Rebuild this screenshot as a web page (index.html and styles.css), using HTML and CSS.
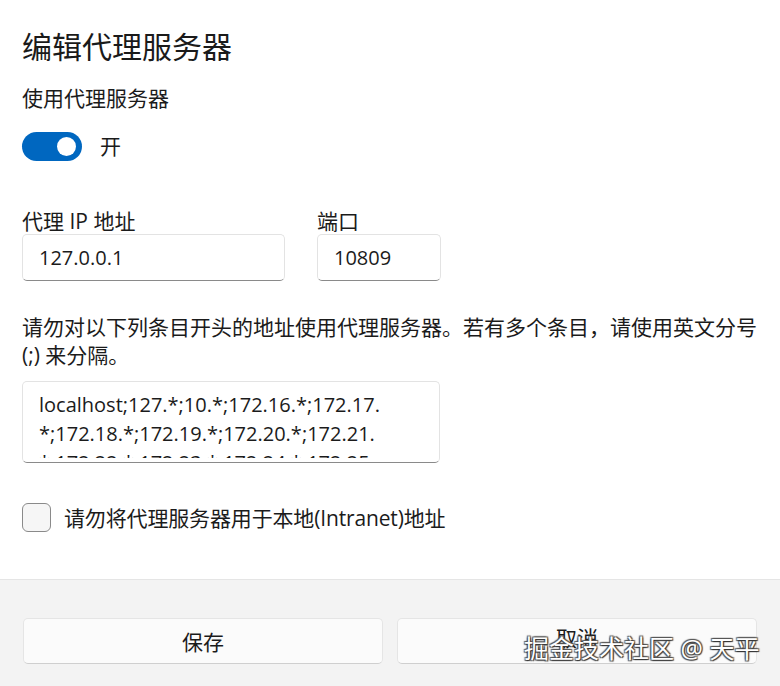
FILE: index.html
```html
<!DOCTYPE html>
<html lang="zh-CN">
<head>
<meta charset="utf-8">
<title>编辑代理服务器</title>
<link rel="stylesheet" href="styles.css">
</head>
<body>
<div class="dialog">
  <div class="content">
    <h1 class="title">编辑代理服务器</h1>
    <div class="label-use">使用代理服务器</div>
    <div class="toggle-row">
      <span class="toggle"><span class="knob"></span></span>
      <span class="toggle-text">开</span>
    </div>
    <div class="fields">
      <div class="field field-ip">
        <div class="field-label">代理 IP 地址</div>
        <div class="input">127.0.0.1</div>
      </div>
      <div class="field field-port">
        <div class="field-label">端口</div>
        <div class="input">10809</div>
      </div>
    </div>
    <p class="desc">请勿对以下列条目开头的地址使用代理服务器。若有多个条目，请使用英文分号 (;) 来分隔。</p>
    <div class="textarea">
      <div class="textarea-inner">localhost;127.*;10.*;172.16.*;172.17.<br>*;172.18.*;172.19.*;172.20.*;172.21.<br>*;172.22.*;172.23.*;172.24.*;172.25.</div>
    </div>
    <div class="check-row">
      <span class="checkbox"></span>
      <span class="check-label">请勿将代理服务器用于本地(Intranet)地址</span>
    </div>
  </div>
  <div class="footer">
    <button class="btn">保存</button>
    <button class="btn btn-cancel">取消</button>
  </div>
  <div class="watermark">掘金技术社区 @ 天平</div>
</div>
</body>
</html>
```
FILE: styles.css
```css
* { box-sizing: border-box; }
html, body {
  margin: 0;
  padding: 0;
  background: #ffffff;
}
body {
  font-family: "Segoe UI", "Open Sans", "Noto Sans CJK SC", sans-serif;
  color: #1b1b1b;
  width: 780px;
  height: 686px;
  overflow: hidden;
}
.dialog {
  position: relative;
  width: 780px;
  height: 686px;
  display: flex;
  flex-direction: column;
}
.content {
  height: 579px;
  padding: 27px 22px 0 22px;
  display: flex;
  flex-direction: column;
}
.title {
  margin: 0;
  font-size: 30px;
  line-height: 40px;
  font-weight: 400;
  color: #1a1a1a;
}
.label-use {
  margin-top: 17px;
  font-size: 21px;
  line-height: 28px;
}
.toggle-row {
  margin-top: 20px;
  display: flex;
  align-items: center;
  gap: 18px;
  height: 28px;
}
.toggle {
  width: 60px;
  height: 29px;
  border-radius: 15px;
  background: #0067c0;
  display: flex;
  align-items: center;
  justify-content: flex-end;
  padding-right: 6px;
}
.knob {
  width: 19px;
  height: 19px;
  border-radius: 50%;
  background: #ffffff;
}
.toggle-text {
  font-size: 21px;
  line-height: 28px;
}
.fields {
  margin-top: 48px;
  display: flex;
  gap: 32px;
}
.field-label {
  font-size: 21px;
  line-height: 26px;
}
.field-ip .input { width: 263px; }
.field-port .input { width: 124px; }
.input {
  height: 47px;
  border: 1px solid #e3e3e3;
  border-bottom-color: #8a8a8a;
  border-radius: 5px;
  background: #ffffff;
  padding: 0 16px;
  display: flex;
  align-items: center;
  font-size: 20px;
  color: #1b1b1b;
}
.desc {
  margin: 32px 0 0 0;
  font-size: 21px;
  line-height: 28px;
}
.textarea {
  margin-top: 12px;
  width: 418px;
  height: 82px;
  border: 1px solid #e3e3e3;
  border-bottom-color: #8a8a8a;
  border-radius: 5px;
  background: #ffffff;
  padding: 8px 10px 0 16px;
}
.textarea-inner {
  height: 68px;
  overflow: hidden;
  font-size: 20px;
  line-height: 29px;
  white-space: nowrap;
}
.check-row {
  margin-top: 40px;
  display: flex;
  align-items: center;
  gap: 13px;
}
.checkbox {
  width: 29px;
  height: 29px;
  border: 1px solid #8a8a8a;
  border-radius: 6px;
  background: #f6f6f6;
}
.check-label {
  font-size: 21px;
  line-height: 28px;
  letter-spacing: -0.15px;
}
.footer {
  flex: 1;
  background: #f3f3f3;
  border-top: 1px solid #e5e5e5;
  display: flex;
  gap: 14px;
  padding: 38px 23px 0 23px;
}
.btn {
  flex: 1;
  height: 46px;
  border: 1px solid #e5e5e5;
  border-bottom-color: #cfcfcf;
  border-radius: 5px;
  background: #fbfbfb;
  font-family: "Segoe UI", "Open Sans", "Noto Sans CJK SC", sans-serif;
  font-size: 21px;
  color: #1b1b1b;
  padding: 0;
}
.btn-cancel {
  padding-bottom: 8px;
}
.watermark {
  position: absolute;
  left: 524px;
  top: 630px;
  font-size: 25px;
  line-height: 36px;
  color: #ffffff;
  white-space: nowrap;
  text-shadow: 1px 1px 1px #333, -1px -1px 1px #555, 1px -1px 1px #555, -1px 1px 1px #555;
}
```
